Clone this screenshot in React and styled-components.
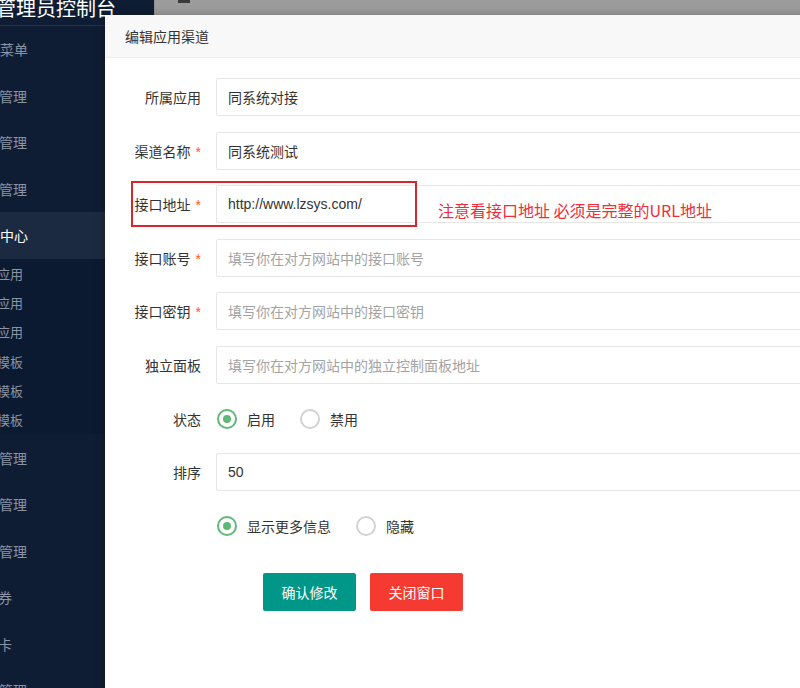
import React from 'react';
import styled, { createGlobalStyle } from 'styled-components';

const GlobalStyle = createGlobalStyle`
  html, body {
    margin: 0;
    padding: 0;
    width: 800px;
    height: 688px;
    overflow: hidden;
    background: #9c9c9c;
  }
  * { box-sizing: border-box; }
  body {
    font-family: "Liberation Sans", "Noto Sans CJK SC", sans-serif;
    font-size: 14px;
    color: #333;
  }
`;

const Page = styled.div`
  position: relative;
  display: flex;
  width: 800px;
  height: 688px;
  overflow: hidden;
`;

const Sidebar = styled.div`
  width: 154px;
  flex-shrink: 0;
  background: #0f1d34;
  display: flex;
  flex-direction: column;
  overflow: hidden;
`;

const Logo = styled.div`
  height: 26px;
  flex-shrink: 0;
  display: flex;
  align-items: flex-end;
  padding-bottom: 6px;
  border-bottom: 1px solid #26344b;
  overflow: hidden;
  white-space: nowrap;
  color: #ffffff;
  font-size: 20px;
  line-height: 22px;
  font-family: "Noto Sans CJK SC", sans-serif;
  text-indent: -44px;
`;

const MenuItem = styled.div`
  height: 46.5px;
  flex-shrink: 0;
  display: flex;
  align-items: center;
  background: ${p => (p.active ? '#1c2a41' : 'transparent')};
  color: ${p => (p.active ? '#ffffff' : '#8a94a4')};
  font-size: 14px;
  white-space: nowrap;
  font-family: "Noto Sans CJK SC", sans-serif;
`;

const SubMenu = styled.div`
  flex-shrink: 0;
  background: #0c1a31;
  display: flex;
  flex-direction: column;
`;

const SubItem = styled.div`
  height: 29.3px;
  flex-shrink: 0;
  display: flex;
  align-items: center;
  color: #8a94a4;
  font-size: 13px;
  white-space: nowrap;
  font-family: "Noto Sans CJK SC", sans-serif;
`;

const Label = styled.span`
  margin-left: ${p => p.offset || 0}px;
`;

const Main = styled.div`
  flex: 1;
  display: flex;
  flex-direction: column;
  background: #f2f2f2;
`;

const TopBar = styled.div`
  height: 48px;
  background: #9c9c9c;
  border-left: 1px solid #8f8f8f;
  padding-left: 23px;
`;

const BarIcon = styled.span`
  display: block;
  width: 12px;
  height: 3px;
  background: #3a3a3a;
`;

const Modal = styled.div`
  position: absolute;
  left: 105px;
  top: 15px;
  width: 730px;
  height: 700px;
  background: #ffffff;
  box-shadow: 1px 1px 10px rgba(0, 0, 0, 0.3);
  display: flex;
  flex-direction: column;
`;

const ModalHeader = styled.div`
  height: 43px;
  padding-left: 20px;
  display: flex;
  align-items: center;
  background: #f8f8f8;
  border-bottom: 1px solid #eeeeee;
  font-size: 14px;
  color: #333;
  font-family: "Noto Sans CJK SC", sans-serif;
`;

const Form = styled.div`
  padding: 20px 0 0 1px;
  display: flex;
  flex-direction: column;
`;

const FormItem = styled.div`
  position: relative;
  display: flex;
  align-items: center;
  height: 38px;
  margin-bottom: 15.6px;
`;

const FieldLabel = styled.label`
  width: 110px;
  padding-right: 15px;
  text-align: right;
  font-size: 14px;
  color: #333;
  font-family: "Noto Sans CJK SC", sans-serif;
  white-space: nowrap;
`;

const Star = styled.span`
  color: #ff5722;
  margin-left: 5px;
  font-family: "Liberation Sans", sans-serif;
`;

const Input = styled.div`
  flex: 1;
  height: 38px;
  border: 1px solid #e6e6e6;
  border-radius: 2px;
  padding-left: 11px;
  display: flex;
  align-items: center;
  font-size: 14px;
  color: ${p => (p.placeholder ? '#a3a3a3' : '#333')};
  font-family: "Liberation Sans", "Noto Sans CJK SC", sans-serif;
  white-space: nowrap;
`;

const RadioGroup = styled.div`
  display: flex;
  align-items: center;
  gap: 25px;
  padding-left: 1px;
`;

const Radio = styled.div`
  display: flex;
  align-items: center;
  gap: 10px;
  font-size: 14px;
  color: #333;
  font-family: "Noto Sans CJK SC", sans-serif;
`;

const RadioCircle = styled.span`
  width: 20px;
  height: 20px;
  border-radius: 50%;
  border: 2px solid ${p => (p.checked ? '#5fb878' : '#d2d2d2')};
  display: flex;
  align-items: center;
  justify-content: center;

  &::after {
    content: '';
    display: ${p => (p.checked ? 'block' : 'none')};
    width: 8px;
    height: 8px;
    border-radius: 50%;
    background: #5fb878;
  }
`;

const HighlightBox = styled.div`
  position: absolute;
  left: 25px;
  top: -4px;
  width: 286px;
  height: 46px;
  border: 2px solid #d8262e;
  pointer-events: none;
`;

const Note = styled.div`
  position: absolute;
  left: 332px;
  top: 16px;
  color: #ee2d3b;
  font-size: 16px;
  line-height: 18px;
  white-space: nowrap;
  font-family: "Noto Sans CJK SC", sans-serif;
`;

const Buttons = styled.div`
  display: flex;
  gap: 14px;
  padding-left: 157px;
  margin-top: 13px;
`;

const Button = styled.button`
  height: 38px;
  padding: 0 18.5px;
  border: none;
  border-radius: 2px;
  background: ${p => p.bg};
  color: #ffffff;
  font-size: 14px;
  font-family: "Noto Sans CJK SC", sans-serif;
  cursor: pointer;
`;

const menuTop = [
  { text: '菜单', offset: 0 },
  { text: '管理', offset: -1 },
  { text: '管理', offset: -1 },
  { text: '管理', offset: -1 },
  { text: '中心', offset: 0, active: true },
];

const subMenu = [
  { text: '应用', offset: -3 },
  { text: '应用', offset: -3 },
  { text: '应用', offset: -3 },
  { text: '模板', offset: -3 },
  { text: '模板', offset: -3 },
  { text: '模板', offset: -3 },
];

const menuBottom = [
  { text: '管理', offset: -1 },
  { text: '管理', offset: -1 },
  { text: '管理', offset: -1 },
  { text: '券', offset: -2 },
  { text: '卡', offset: -2 },
  { text: '管理', offset: -1 },
];

const fields = [
  { label: '所属应用', value: '同系统对接' },
  { label: '渠道名称', required: true, value: '同系统测试' },
  { label: '接口地址', required: true, value: 'http://www.lzsys.com/', note: true },
  { label: '接口账号', required: true, placeholder: '填写你在对方网站中的接口账号' },
  { label: '接口密钥', required: true, placeholder: '填写你在对方网站中的接口密钥' },
  { label: '独立面板', placeholder: '填写你在对方网站中的独立控制面板地址' },
];

const App = () => {
  return (
    <Page>
      <GlobalStyle />
      <Sidebar>
        <Logo>后台管理员控制台</Logo>
        {menuTop.map((m, i) => (
          <MenuItem key={'t' + i} active={m.active}>
            <Label offset={m.offset}>{m.text}</Label>
          </MenuItem>
        ))}
        <SubMenu>
          {subMenu.map((m, i) => (
            <SubItem key={'s' + i}>
              <Label offset={m.offset}>{m.text}</Label>
            </SubItem>
          ))}
        </SubMenu>
        {menuBottom.map((m, i) => (
          <MenuItem key={'b' + i}>
            <Label offset={m.offset}>{m.text}</Label>
          </MenuItem>
        ))}
      </Sidebar>
      <Main>
        <TopBar>
          <BarIcon />
        </TopBar>
      </Main>

      <Modal>
        <ModalHeader>编辑应用渠道</ModalHeader>
        <Form>
          {fields.map(f => (
            <FormItem key={f.label}>
              <FieldLabel>
                {f.label}
                {f.required && <Star>*</Star>}
              </FieldLabel>
              <Input placeholder={f.placeholder ? 1 : 0}>{f.value || f.placeholder}</Input>
              {f.note && (
                <>
                  <HighlightBox />
                  <Note>注意看接口地址 必须是完整的URL地址</Note>
                </>
              )}
            </FormItem>
          ))}
          <FormItem>
            <FieldLabel>状态</FieldLabel>
            <RadioGroup>
              <Radio><RadioCircle checked />启用</Radio>
              <Radio><RadioCircle />禁用</Radio>
            </RadioGroup>
          </FormItem>
          <FormItem>
            <FieldLabel>排序</FieldLabel>
            <Input>50</Input>
          </FormItem>
          <FormItem>
            <FieldLabel />
            <RadioGroup>
              <Radio><RadioCircle checked />显示更多信息</Radio>
              <Radio><RadioCircle />隐藏</Radio>
            </RadioGroup>
          </FormItem>
          <Buttons>
            <Button bg="#009688">确认修改</Button>
            <Button bg="#f53b31">关闭窗口</Button>
          </Buttons>
        </Form>
      </Modal>
    </Page>
  );
};

export default App;
